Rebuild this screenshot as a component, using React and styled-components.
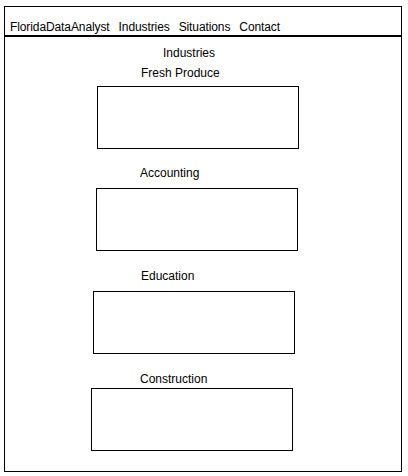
import React from "react";
import styled, { createGlobalStyle } from "styled-components";

const GlobalStyle = createGlobalStyle`
  html, body {
    margin: 0;
    padding: 0;
    background: #fff;
  }
  body {
    font-family: "Liberation Sans", Arial, sans-serif;
    color: #000;
  }
`;

const Frame = styled.div`
  box-sizing: border-box;
  margin: 6px 6px 0 4px;
  height: 466px;
  border: 1.5px solid #000;
  display: flex;
  flex-direction: column;
`;

const Header = styled.header`
  box-sizing: border-box;
  height: 30px;
  display: flex;
  align-items: flex-end;
  gap: 9px;
  padding: 0 0 1px 5px;
  border-bottom: 2.5px solid #000;
  font-size: 12px;
  line-height: 14px;
`;

const NavItem = styled.span`
  letter-spacing: -0.1px;
`;

const Content = styled.main`
  display: flex;
  flex-direction: column;
  padding-left: 87px;
`;

const Title = styled.h1`
  margin: 9px 0 0 71px;
  font-size: 12px;
  line-height: 14px;
  font-weight: normal;
`;

const Section = styled.section`
  display: flex;
  flex-direction: column;
  margin-top: ${({ $top }) => $top}px;
`;

const Label = styled.h2`
  margin: 0 0 ${({ $gap }) => $gap}px ${({ $indent }) => $indent}px;
  font-size: 12px;
  line-height: 14px;
  font-weight: normal;
`;

const Card = styled.div`
  box-sizing: border-box;
  width: 202px;
  height: 63px;
  margin-left: ${({ $shift }) => $shift}px;
  border: 1.5px solid #000;
`;

const industries = [
  { name: "Fresh Produce", top: 6, gap: 6, indent: 49, shift: 5 },
  { name: "Accounting", top: 17, gap: 8, indent: 48, shift: 4 },
  { name: "Education", top: 18, gap: 8, indent: 49, shift: 1 },
  { name: "Construction", top: 18, gap: 2, indent: 48, shift: -1 },
];

export default function App() {
  return (
    <>
      <GlobalStyle />
      <Frame>
        <Header>
          <NavItem>FloridaDataAnalyst</NavItem>
          <NavItem>Industries</NavItem>
          <NavItem>Situations</NavItem>
          <NavItem>Contact</NavItem>
        </Header>
        <Content>
          <Title>Industries</Title>
          {industries.map((item) => (
            <Section key={item.name} $top={item.top}>
              <Label $gap={item.gap} $indent={item.indent}>
                {item.name}
              </Label>
              <Card $shift={item.shift} />
            </Section>
          ))}
        </Content>
      </Frame>
    </>
  );
}
